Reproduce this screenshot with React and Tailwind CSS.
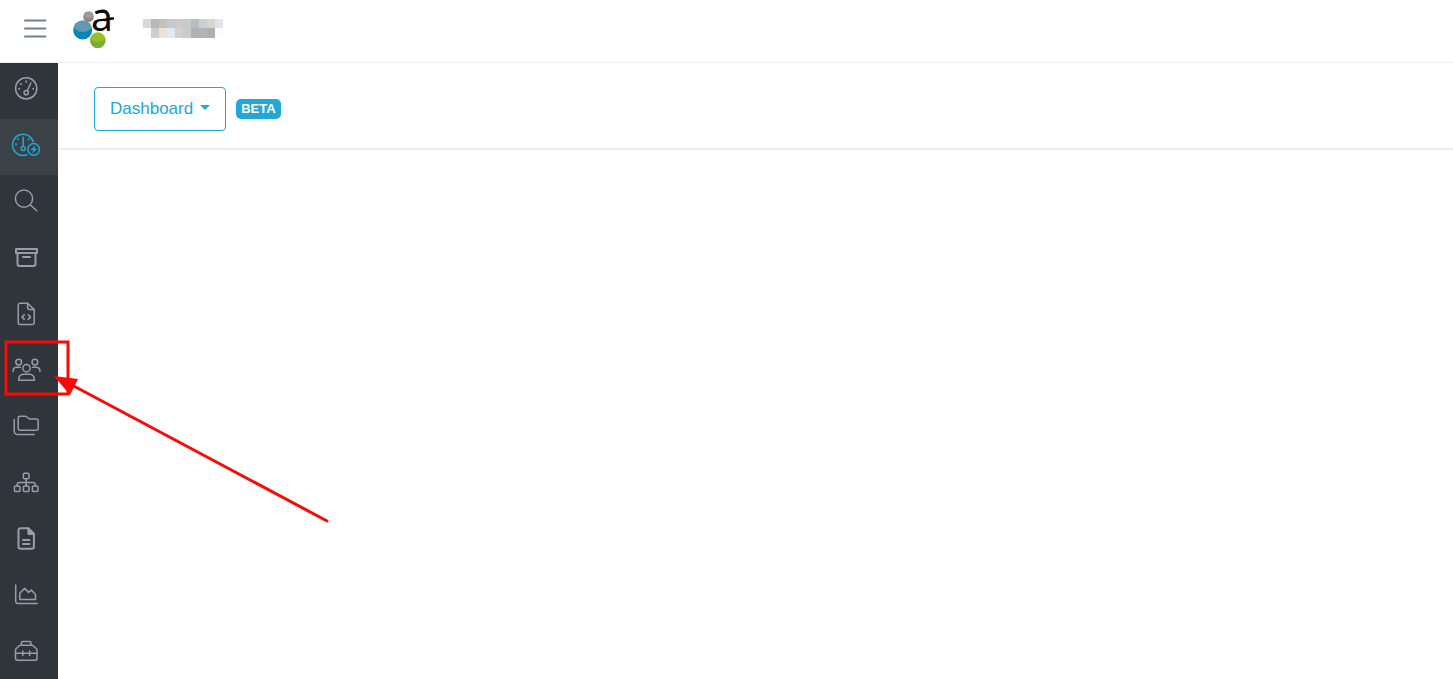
import React from 'react'

const DashboardIcon = () => (
  <>
    <circle cx="14.2" cy="11.4" r="10.6" />
    <circle cx="14.2" cy="15.7" r="2.1" />
    <path d="M15.3 13.7 18.8 6" />
    <path d="M14.2 4.6v.1M9 6.9v.1M7.2 11.7v.1M21.2 11.7v.1" strokeWidth="2" />
  </>
)

const DashboardBetaIcon = () => (
  <>
    <path d="M21.2 8.500A10.600 10.600 0 1 0 14.800 21.800" />
    <circle cx="11.200" cy="15.600" r="2" />
    <path d="M11.200 13.500V4.200" />
    <path d="M5.800 6.200v.1M4.100 11.200v.1M16.600 6.200v.1" strokeWidth="2" />
    <circle cx="21.700" cy="16.400" r="5.800" />
    <path d="m23.600 12.300-5.200 4.700h3l-1.300 3.600 5.200-4.800h-3z" fill="currentColor" stroke="none" />
  </>
)

const SearchIcon = () => (
  <>
    <circle cx="12" cy="9.600" r="8.600" />
    <path d="m18.200 15.800 6.600 6" />
  </>
)

const ArchiveIcon = () => (
  <g strokeWidth="2">
    <path d="M4 4h21v4H4zM5.500 9.600V19a2 2 0 0 0 2 2h14a2 2 0 0 0 2-2V9.600" />
    <path d="M11 12h7" />
  </g>
)

const CodeFileIcon = () => (
  <>
    <path d="M15.600 1.200H8.200a2 2 0 0 0-2 2v17.200a2 2 0 0 0 2 2h12a2 2 0 0 0 2-2V7.600z" />
    <path d="M15.600 1.200v4.400a2 2 0 0 0 2 2h4.600" />
    <path d="m12.300 12.800-2.300 2.300 2.300 2.300M16.200 12.800l2.300 2.300-2.300 2.300" />
  </>
)

const UsersIcon = () => (
  <>
    <circle cx="6.700" cy="4.100" r="2.900" />
    <circle cx="22.900" cy="4.100" r="2.900" />
    <circle cx="14.500" cy="10.200" r="3.700" />
    <path d="M6.600 22.200c0-4 2.300-6 5-6h5.800c2.700 0 5 2 5 6z" />
    <path d="M1 13.400c0-2.700 1.600-4.100 4-4.100h3.300M28 13.400c0-2.700-1.600-4.100-4-4.100h-3.300" />
  </>
)

const FoldersIcon = () => (
  <>
    <path d="M8.200 2.200h5.100c1.900 0 2.600 2.700 4.500 2.700h6.400a2 2 0 0 1 2 2v7.400a2 2 0 0 1-2 2h-16a2 2 0 0 1-2-2V4.200a2 2 0 0 1 2-2z" />
    <path d="M2.200 5.400v12a3 3 0 0 0 3 3h17" />
  </>
)

const SitemapIcon = () => (
  <>
    <rect x="11.400" y="3.200" width="5.600" height="5.600" rx="1.200" />
    <rect x="2.400" y="16" width="5.600" height="5.600" rx="1.200" />
    <rect x="11.400" y="16" width="5.600" height="5.600" rx="1.200" />
    <rect x="20.400" y="16" width="5.600" height="5.600" rx="1.200" />
    <path d="M14.200 9v7M5.200 16v-1.500c0-1.300.5-2 2-2h14c1.500 0 2 .7 2 2V16" />
  </>
)

const ReportIcon = () => (
  <g strokeWidth="2">
    <path d="M16 1.200H8.500a2 2 0 0 0-2 2v16.600a2 2 0 0 0 2 2h11.400a2 2 0 0 0 2-2V7z" />
    <path d="M16.400 1.200V7h5.500z" fill="currentColor" />
    <path d="M11 13h6.500M11 17h6.500" />
  </g>
)

const ChartIcon = () => (
  <>
    <path d="M3.700 2v16.500a2 2 0 0 0 2 2h19.500" />
    <path d="M7.800 16.500v-6.300l4.800-4.800 4 4 2.600-2.300 4.300 4.200v5.200z" />
  </>
)

const ToolboxIcon = () => (
  <>
    <path d="M9.400 6.300V4a1.500 1.500 0 0 1 1.500-1.500h6.600A1.500 1.500 0 0 1 19 4v2.300" />
    <path d="M8.800 6.300h10.800q1 0 1.800.7l2.800 2.500q.8.800.8 1.800v7.900a2 2 0 0 1-2 2H5.500a2 2 0 0 1-2-2v-7.900q0-1 .8-1.800L7 7q.8-.7 1.800-.7z" />
    <path d="M3.500 14.200H25M10.800 12v4.600M17.600 12v4.600" />
  </>
)

const menuGroups = [
  [
    { label: 'Overview', icon: DashboardIcon },
    { label: 'Dashboard', icon: DashboardBetaIcon, active: true },
    { label: 'Search', icon: SearchIcon },
    { label: 'Archive', icon: ArchiveIcon },
  ],
  [
    { label: 'Code files', icon: CodeFileIcon },
    { label: 'Users', icon: UsersIcon },
    { label: 'Folders', icon: FoldersIcon },
    { label: 'Hierarchy', icon: SitemapIcon },
  ],
  [
    { label: 'Reports', icon: ReportIcon },
    { label: 'Statistics', icon: ChartIcon },
    { label: 'Tools', icon: ToolboxIcon },
  ],
]

const censorTop = ['bg-[#dbd7d4]', 'bg-[#b6b8ba]', 'bg-[#c7bfba]', 'bg-[#c1cad5]', 'bg-[#cfcac7]', 'bg-[#c7cac9]', 'bg-[#babdbf]', 'bg-[#cdd0d1]', 'bg-[#d7d6d3]', 'bg-[#e1e4ea]']
const censorBottom = ['bg-[#fefefe]', 'bg-[#cdcecf]', 'bg-[#ebe2dc]', 'bg-[#e1e9f2]', 'bg-[#d5d0ce]', 'bg-[#c7cbc9]', 'bg-[#b1b1b1]', 'bg-[#b1b5b9]', 'bg-[#b0afae]', 'bg-[#fafcfe]']

const Logo = () => (
  <svg className="h-10 w-[42px] overflow-visible" viewBox="0 0 42 40" aria-hidden="true">
    <defs>
      <clipPath id="blueBall"><circle cx="9.700" cy="22" r="9.500" /></clipPath>
      <clipPath id="greenBall"><circle cx="24.800" cy="32.400" r="7.800" /></clipPath>
    </defs>
    <circle cx="15.500" cy="8.700" r="5.300" fill="#8e8580" />
    <ellipse cx="15.500" cy="7" rx="4.500" ry="3.400" fill="#a39993" />
    <g clipPath="url(#blueBall)">
      <rect y="12" width="20" height="20" fill="#0788b0" />
      <ellipse cx="9.700" cy="17.500" rx="9" ry="6.500" fill="#6398b3" />
    </g>
    <g clipPath="url(#greenBall)">
      <rect x="16" y="24" width="18" height="18" fill="#77b032" />
      <ellipse cx="24.800" cy="28.500" rx="7.500" ry="5.500" fill="#9bbd25" />
    </g>
    <text x="18" y="23" fontSize="39" fill="#0b0708" className="font-['Noto_Sans',sans-serif]">a</text>
    <path d="M22.500 4.800c3-2 8-2.800 11-1" fill="none" stroke="#0b0708" strokeWidth="2.400" />
    <path d="M31 12.300c3.500-1.600 6.500-2 10-1.700" fill="none" stroke="#0b0708" strokeWidth="2.400" />
  </svg>
)

const Header = () => (
  <header className="flex h-[63px] shrink-0 items-start border-b border-[#eeeeee] bg-white pl-6">
    <button type="button" aria-label="Toggle menu" className="mt-4 text-[#73818f]">
      <svg className="h-6 w-[23px]" viewBox="0 0 23 24" fill="none" stroke="currentColor" strokeWidth="2" strokeLinecap="round">
        <path d="M1 4.500h20.500M1 12.500h20.500M1 20.500h20.500" />
      </svg>
    </button>
    <a href="#home" aria-label="Home" className="mt-2 ml-[26px]">
      <Logo />
    </a>
    <div className="mt-[19px] ml-7 grid grid-cols-[repeat(10,8px)]" aria-hidden="true">
      {censorTop.map((color, i) => <span key={i} className={`h-[9px] ${color}`} />)}
      {censorBottom.map((color, i) => <span key={i} className={`h-[10px] ${color}`} />)}
    </div>
  </header>
)

const Sidebar = () => (
  <nav aria-label="Main" className="flex w-[58px] shrink-0 flex-col gap-px overflow-hidden bg-[#2f353a]">
    {menuGroups.map((group, i) => (
      <ul key={i} className="shrink-0">
        {group.map(({ label, icon: Icon, active }) => (
          <li key={label}>
            <a
              href={`#${label}`}
              aria-label={label}
              aria-current={active ? 'page' : undefined}
              className={`flex h-14 items-start pt-[14px] pl-3 ${active ? 'bg-[#3a4248] text-[#20a8d8]' : 'text-[#949fa9]'}`}
            >
              <svg
                className="h-6 w-[29px]"
                viewBox="0 0 29 24"
                fill="none"
                stroke="currentColor"
                strokeWidth="1.500"
                strokeLinecap="round"
                strokeLinejoin="round"
              >
                <Icon />
              </svg>
            </a>
          </li>
        ))}
      </ul>
    ))}
  </nav>
)

// Red frame and arrow pointing at the users entry
const Annotation = () => (
  <svg className="pointer-events-none absolute top-[340px] left-1 h-[184px] w-[326px]" viewBox="0 0 326 184" fill="none" stroke="#fb0a05" aria-hidden="true">
    <rect x="2" y="2" width="62" height="52" strokeWidth="3" />
    <path d="M324 181.500 66 44" strokeWidth="3" />
    <path d="m50 36 24 3-8 16z" fill="#fb0a05" stroke="none" />
  </svg>
)

export default function App() {
  return (
    <div className="relative flex h-screen flex-col overflow-hidden bg-white font-['Liberation_Sans',Arial,sans-serif]">
      <Header />
      <div className="flex min-h-0 flex-1">
        <Sidebar />
        <main className="min-w-0 flex-1">
          <div className="flex items-start border-b-2 border-[#eeeeee] pt-6 pb-[17px] pl-9">
            <button type="button" className="flex h-11 items-center rounded border border-[#20a8d8] px-[15px] text-[17px] text-[#20a8d8]">
              Dashboard
              <span className="mb-1 ml-[7px] border-x-5 border-t-5 border-x-transparent border-t-[#20a8d8]" />
            </button>
            <span className="mt-3 ml-[10px] rounded-[5px] bg-[#20a8d8] px-[5px] text-[13px] leading-5 font-bold text-white">BETA</span>
          </div>
        </main>
      </div>
      <Annotation />
    </div>
  )
}
